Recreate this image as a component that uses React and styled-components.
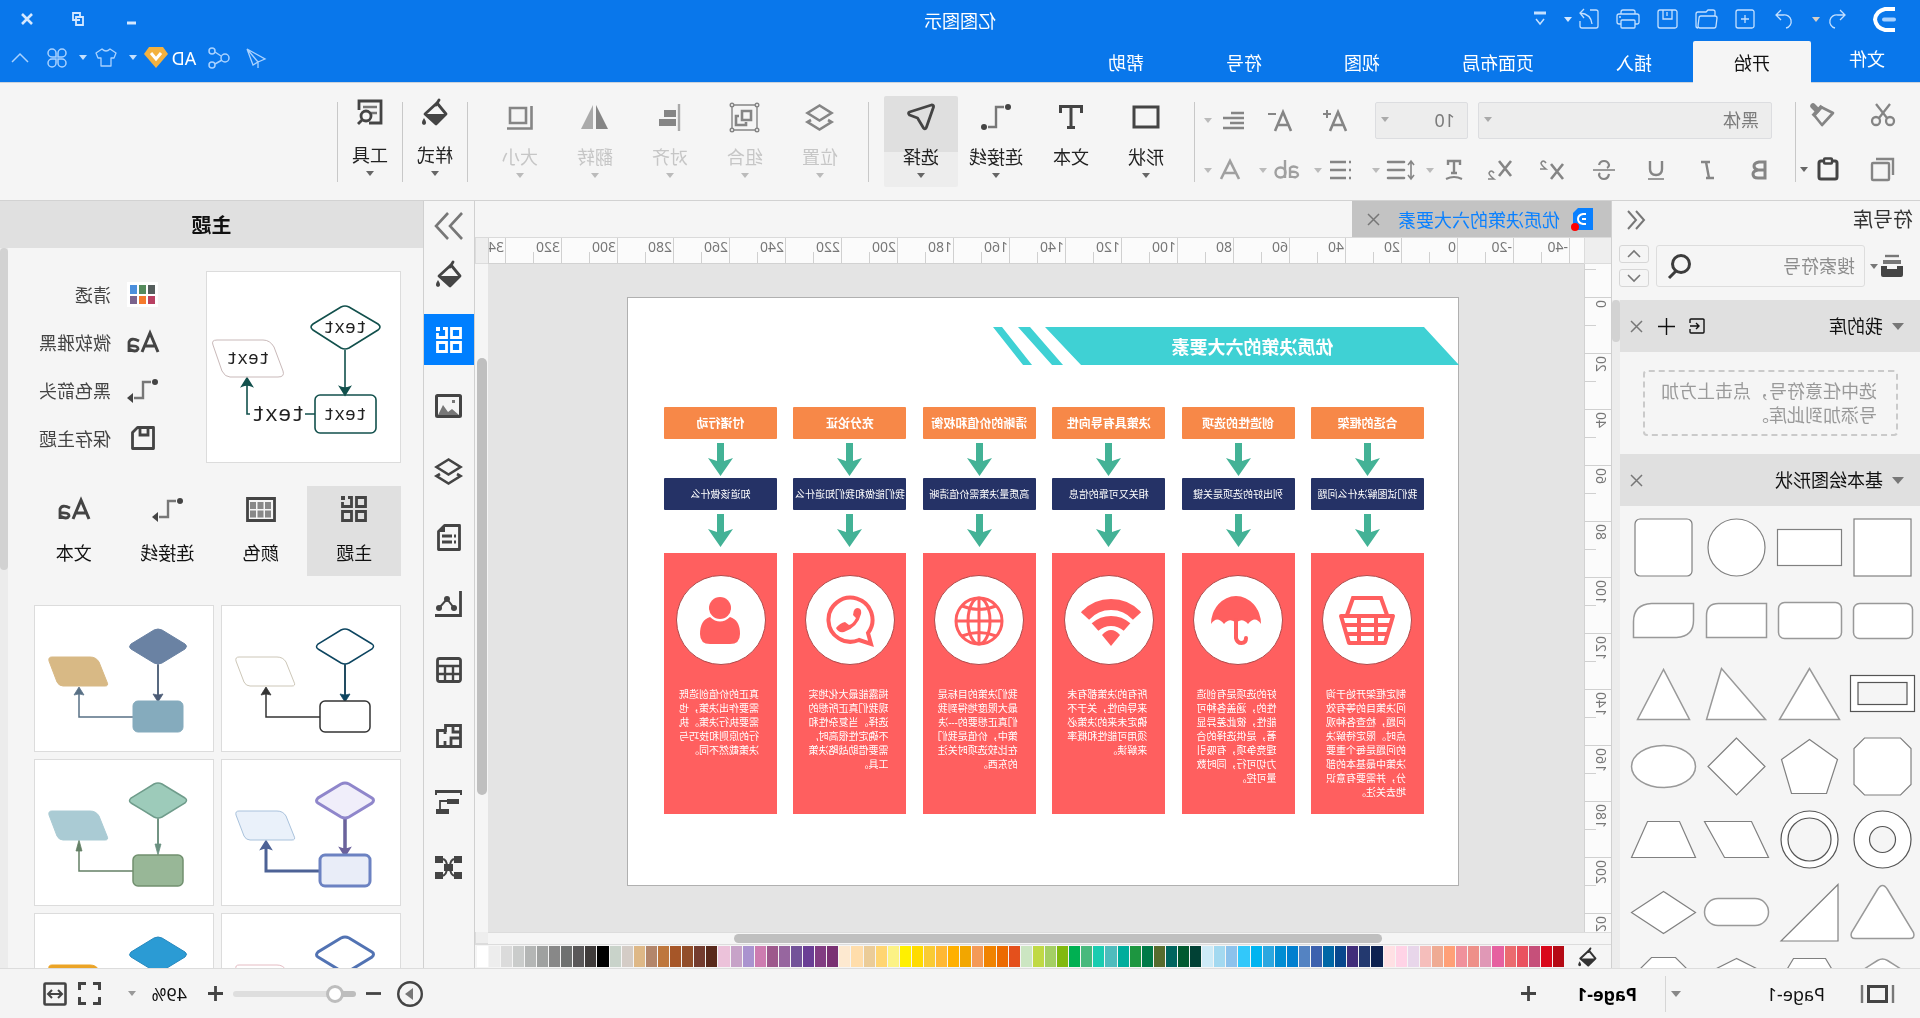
import React from 'react';
import styled, { createGlobalStyle, css } from 'styled-components';

const GlobalStyle = createGlobalStyle`
  * {
    box-sizing: border-box;
  }

  body {
    margin: 0;
    background: #f5f5f5;
    overflow: hidden;
  }

  body, button, input, select {
    font-family: 'Noto Sans', 'Noto Sans CJK SC', sans-serif;
  }

  button, input, select {
    margin: 0;
    padding: 0;
    border: 0;
    background: none;
    color: inherit;
  }

  h1, h2, h3, p {
    margin: 0;
    font-weight: normal;
  }
`;

/* The whole window is laid out left to right and then flipped. */
const Window = styled.div`
  display: flex;
  flex-direction: column;
  height: 100vh;
  transform: scaleX(-1);
  font-size: 18px;
  line-height: 24px;
  color: #111;
`;

const Svg = styled.svg`
  display: block;
  flex: none;
  fill: none;
  stroke: currentColor;
  stroke-width: ${(p) => p.$stroke || 2};
  overflow: visible;
`;

const Slot = styled.button`
  display: flex;
  align-items: center;
  justify-content: ${(p) => (p.$end ? 'flex-end' : 'center')};
  flex: none;
  width: ${(p) => p.$w || 40}px;
  height: 28px;
  padding-right: ${(p) => (p.$end ? 8 : 0)}px;
  color: ${(p) => p.$color || 'inherit'};
`;

const Triangle = styled.span`
  flex: none;
  width: 0;
  height: 0;
  border: ${(p) => p.$size || 4}px solid transparent;
  border-bottom-width: 0;
  border-top: ${(p) => (p.$size || 4) + 1}px solid ${(p) => p.$color || '#aaa'};
`;

const Divider = styled.span`
  flex: none;
  width: 1px;
  height: 80px;
  margin: 19px ${(p) => p.$after || 0}px 0 ${(p) => p.$before || 0}px;
  background: #c8c8c8;
`;

/* ---------- header ---------- */

const Header = styled.header`
  flex: none;
  height: 83px;
  border-bottom: 1px solid #ccd3dc;
  background: #0977eb;
  color: #fff;
`;

const TitleBar = styled.div`
  display: grid;
  grid-template-columns: 1fr auto 1fr;
  align-items: center;
  height: 41px;
  padding: 0 2px 3px;
`;

const QuickAccess = styled.div`
  display: flex;
  align-items: center;
  color: #c4e0ff;
`;

const QuickCaret = styled.button`
  display: flex;
  justify-content: center;
  width: 14px;
  margin: 0 5px 0 -5px;
`;

const Logo = styled(Svg)`
  margin: 0 16px 0 23px;
  color: #fff;
`;

const AppTitle = styled.h1`
  font-size: 18px;
  padding-top: 4px;
`;

const WindowButtons = styled.div`
  display: flex;
  justify-content: flex-end;
  color: #d5e8ff;
`;

const MenuBar = styled.div`
  display: flex;
  justify-content: space-between;
  height: 41px;
`;

const Tabs = styled.nav`
  display: flex;
`;

const FileTab = styled.button`
  width: 109px;
  padding: 0 3px 8px 0;
  font-size: 18px;
`;

const MenuTab = styled.button`
  padding: 0 41px;
  border-radius: 2px 2px 0 0;
  font-size: 18px;
  background: ${(p) => (p.$active ? '#f5f5f5' : 'none')};
  color: ${(p) => (p.$active ? '#111' : '#fff')};
  height: ${(p) => (p.$active ? 42 : 41)}px;
`;

const AccountBar = styled.div`
  display: flex;
  align-items: center;
  padding: 0 1px 8px 0;
  color: #a9d2ff;
`;

const AccountName = styled.span`
  width: 32px;
  color: #fff;
  text-align: center;
`;

/* ---------- ribbon ---------- */

const Ribbon = styled.div`
  display: flex;
  flex: none;
  height: 118px;
  padding-left: 16px;
  border-bottom: 1px solid #d2d2d2;
  background: #f5f5f5;
`;

const ToolRows = styled.div`
  display: grid;
  align-content: start;
  grid-auto-rows: ${(p) => p.$row}px;
  padding-top: ${(p) => p.$top}px;
  margin-left: ${(p) => p.$left || 0}px;
`;

const ToolRow = styled.div`
  display: flex;
  align-items: center;
  padding-left: ${(p) => p.$indent || 0}px;
  color: #858585;
`;

const Spacer = styled.span`
  width: ${(p) => p.$w || 18}px;
`;

const CaretButton = styled.button`
  display: flex;
  justify-content: center;
  width: ${(p) => p.$w || 8}px;
`;

const SelectBox = styled.label`
  display: flex;
  align-items: center;
  position: relative;
  width: ${(p) => p.$w}px;
  height: 37px;
  margin-right: 10px;
  border: 1px solid #dcdde0;
  border-radius: 2px;
  background: #ededed;
  color: #7b7b7b;

  select {
    appearance: none;
    flex: 1;
    height: 100%;
    padding-left: 12px;
    font-size: 18px;
  }

  ${Triangle} {
    position: absolute;
    right: 5px;
    top: 14px;
  }
`;

const BigButton = styled.button`
  display: flex;
  flex-direction: column;
  align-items: center;
  flex: none;
  width: ${(p) => p.$w || 74}px;
  height: 91px;
  margin: 13px ${(p) => (p.$w ? 0 : 1)}px 0 0;
  border-radius: 2px;
  font-size: 18px;
  line-height: 24px;
  color: ${(p) => (p.disabled ? '#c6c6c6' : '#222')};
  ${(p) =>
    p.$active &&
    css`
      background: linear-gradient(#dfdfdf 56px, #ededed 56px);
    `}
`;

const BigIcon = styled.span`
  display: flex;
  align-items: center;
  height: ${(p) => (p.$raised ? 32 : 42)}px;
  margin-bottom: ${(p) => (p.$raised ? 15 : 7)}px;
  color: ${(p) => (p.$muted ? '#858585' : '#444')};

  & + span {
    margin-bottom: 4px;
  }
`;

/* ---------- body ---------- */

const Main = styled.main`
  display: flex;
  flex: 1;
  min-height: 0;
`;

const Library = styled.aside`
  display: flex;
  flex-direction: column;
  flex: none;
  width: 309px;
  border-right: 1px solid #d0d0d0;
`;

const LibraryTitle = styled.h2`
  display: flex;
  align-items: center;
  justify-content: space-between;
  height: 37px;
  padding: 0 15px 0 7px;
  font-size: 20px;
  color: #333;
`;

const SearchRow = styled.div`
  display: flex;
  align-items: center;
  height: 62px;
  padding: 0 7px 6px 15px;
  color: #555;
`;

const SearchField = styled.label`
  display: flex;
  align-items: center;
  flex: 1;
  min-width: 0;
  height: 42px;
  margin: 0 7px 0 3px;
  padding: 0 9px;
  border: 1px solid #ddd;
  border-radius: 3px;
  color: #3c3c3c;

  ${Svg} {
    margin-right: 2px;
  }

  input {
    flex: 1;
    min-width: 0;
    font-size: 18px;
    outline: none;
  }

  input::placeholder {
    color: #8d8d8d;
    opacity: 1;
  }
`;

const Stepper = styled.div`
  display: grid;
  gap: 6px;
`;

const StepButton = styled.button`
  display: flex;
  align-items: center;
  justify-content: center;
  width: 30px;
  height: 18px;
  border: 1px solid #d6d6d6;
  border-radius: 3px;
  color: #777;
`;

const Scroller = styled.div`
  display: flex;
  flex: 1;
  min-height: 0;
`;

const ScrollContent = styled.div`
  flex: 1;
  min-width: 0;
  overflow: hidden;
`;

const Gutter = styled.div`
  flex: none;
  width: 8px;
  background: #ececec;

  &::before {
    content: '';
    display: block;
    height: ${(p) => p.$thumb}px;
    border-radius: 4px;
    background: #d2d2d2;
  }
`;

const SectionHead = styled.h3`
  display: flex;
  align-items: center;
  height: 52px;
  padding: 0 2px 0 16px;
  background: #e0e0e0;
  font-size: 18px;
  color: #111;

  span + span {
    flex: 1;
    margin-left: 9px;
  }
`;

const DropHint = styled.p`
  margin: 18px 23px 18px 22px;
  padding: 7px 16px 7px 19px;
  border: 2px dashed #cacaca;
  border-radius: 4px;
  color: #9a9a9a;
  line-height: 24px;
`;

const ShapeGrid = styled.div`
  display: grid;
  grid-template-columns: repeat(4, 73px);
  grid-auto-rows: 73px;
  padding: 5px 0 0 1px;
`;

const Workspace = styled.section`
  display: flex;
  flex-direction: column;
  flex: 1;
  min-width: 0;
  border-right: 1px solid #d0d0d0;
`;

const DocTabs = styled.div`
  display: flex;
  height: 37px;
  border-bottom: 1px solid #dadada;
`;

const DocTab = styled.button`
  display: flex;
  align-items: center;
  width: 259px;
  padding-left: 18px;
  background: #c3c3c3;
  font-size: 18px;
  color: #0980ff;

  span {
    flex: 1;
    margin-left: 13px;
    text-align: left;
    white-space: nowrap;
  }
`;

const Editor = styled.div`
  display: grid;
  grid-template-columns: 27px minmax(0, 1fr) 13px;
  grid-template-rows: 26px minmax(0, 1fr) 12px;
  flex: 1;
  min-height: 0;
`;

const Corner = styled.div`
  background: #eeeeee;
  border: 1px solid #dcdcdc;
  border-width: 0 1px 1px 0;
`;

const RulerX = styled.div`
  display: flex;
  overflow: hidden;
  padding-left: 14px;
  border: 1px solid #d2d2d2;
  border-width: 0 1px 1px 0;
  background: #fbfbfb;
`;

const TickX = styled.span`
  flex: 0 0 56px;
  padding-left: 1px;
  border-left: 1px solid #d0d0d0;
  background: linear-gradient(#d0d0d0, #d0d0d0) 27px 14px / 1px 12px no-repeat;
  font-size: 14px;
  line-height: 18px;
  color: #777;
`;

const RulerY = styled.div`
  overflow: hidden;
  padding-top: 33px;
  border-right: 1px solid #d2d2d2;
  background: linear-gradient(#d0d0d0, #d0d0d0) 15px 5px / 12px 1px no-repeat #fbfbfb;
`;

const TickY = styled.div`
  height: 56px;
  padding: 2px 0 0 1px;
  border-top: 1px solid #d0d0d0;
  background: linear-gradient(#d0d0d0, #d0d0d0) 15px 27px / 12px 1px no-repeat;
  font-size: 14px;
  line-height: 18px;
  color: #777;

  span {
    display: block;
    writing-mode: vertical-rl;
    transform: rotate(180deg);
  }
`;

const ScrollY = styled.div`
  padding: 94px 2px 0 1px;
  background: #f5f5f5;

  &::before {
    content: '';
    display: block;
    height: 437px;
    border-radius: 5px;
    background: #bfbfbf;
  }
`;

const ScrollX = styled.div`
  grid-column: 1 / 3;
  padding: 1px 0 0 229px;
  border-top: 1px solid #dcdcdc;
  background: #f5f5f5;

  &::before {
    content: '';
    display: block;
    width: 648px;
    height: 9px;
    border-radius: 5px;
    background: #bfbfbf;
  }
`;

const Canvas = styled.div`
  overflow: hidden;
  padding: 33px 0 0 125px;
  background: #e4e4e4;
`;

const Palette = styled.div`
  display: flex;
  align-items: center;
  flex: none;
  gap: 1px;
  height: 24px;
  padding-right: 1px;
  border-top: 1px solid #dcdcdc;
  color: #333;
`;

const Swatch = styled.button`
  flex: 1;
  height: 21px;
  background: ${(p) => p.$color};
`;

/* ---------- drawing ---------- */

const Paper = styled.article`
  width: 832px;
  height: 589px;
  padding-top: 29px;
  border: 1px solid #b0b0b0;
  background: #fff;
  color: #fff;
`;

const Banner = styled.div`
  display: grid;
  align-items: center;

  & > * {
    grid-area: 1 / 1;
  }

  h2 {
    width: 411px;
    padding-top: 2px;
    text-align: center;
    font-size: 18px;
    font-weight: bold;
  }
`;

const Columns = styled.div`
  display: flex;
  justify-content: space-between;
  margin-top: 42px;
  padding: 0 36px 0 34px;
`;

const Column = styled.section`
  width: 113px;
`;

const Box = styled.h3`
  height: 32px;
  border-radius: 1px;
  background: ${(p) => (p.$dark ? '#253266' : '#f78848')};
  font-size: ${(p) => (p.$dark ? 10 : 12)}px;
  font-weight: ${(p) => (p.$dark ? 'normal' : 'bold')};
  line-height: 33px;
  text-align: center;
  white-space: nowrap;
`;

const ArrowGap = styled.div`
  display: flex;
  justify-content: center;
  height: ${(p) => p.$h}px;
  padding-top: 4px;
`;

const RedCard = styled.div`
  height: 261px;
  padding-top: 21px;
  background: #ff5f5f;
  color: #ff5f5f;

  p {
    margin: 21px 0 0 18px;
    color: #fff;
    font-size: 10px;
    line-height: 14px;
    white-space: pre;
  }

  ${Svg} {
    margin: 0 auto;
  }
`;

/* ---------- right side ---------- */

const IconStrip = styled.nav`
  display: flex;
  flex-direction: column;
  align-items: center;
  flex: none;
  gap: 15px;
  width: 51px;
  border-right: 1px solid #d0d0d0;
  color: #444;
`;

const StripButton = styled.button`
  display: flex;
  align-items: center;
  justify-content: center;
  width: 50px;
  height: ${(p) => (p.$first ? 32 : 51)}px;
  margin-top: ${(p) => (p.$first ? 9 : 0)}px;
  margin-bottom: ${(p) => (p.$first ? -9 : 0)}px;
  background: ${(p) => (p.$active ? '#007fff' : 'none')};
  color: ${(p) => (p.$active ? '#fff' : 'inherit')};
`;

const ThemePanel = styled.aside`
  display: flex;
  flex-direction: column;
  flex: none;
  width: 423px;
`;

const PanelTitle = styled.h2`
  height: 47px;
  background: #e0e0e0;
  font-size: 20px;
  font-weight: bold;
  line-height: 49px;
  text-align: center;
`;

const PanelBody = styled.div`
  padding: 23px 19px 0 22px;
`;

const Current = styled.div`
  display: flex;
`;

const Preview = styled.div`
  width: 195px;
  height: 192px;
  border: 1px solid #dcdcdc;
  background: #fff;

  text {
    fill: #222;
    stroke: none;
    font-family: 'Liberation Mono', monospace;
    font-size: 18px;
    text-anchor: middle;
  }
`;

const OptionList = styled.div`
  display: grid;
  grid-auto-rows: 48px;
  padding-left: 43px;
`;

const Option = styled.button`
  display: flex;
  align-items: center;
  height: 46px;
  font-size: 18px;
  color: #444;

  & > span:last-child {
    margin-left: 12px;
  }
`;

const OptionIcon = styled.span`
  display: flex;
  justify-content: center;
  width: 40px;
`;

const ThemeTabs = styled.div`
  display: grid;
  grid-template-columns: repeat(4, 1fr);
  margin: 23px 0 29px;
`;

const ThemeTab = styled.button`
  display: flex;
  flex-direction: column;
  align-items: center;
  height: 90px;
  padding-top: 8px;
  background: ${(p) => (p.$active ? '#e0e0e0' : 'none')};
  font-size: 18px;

  span:first-child {
    display: flex;
    align-items: center;
    height: 30px;
    margin-bottom: 15px;
    color: #444;
  }
`;

const ThemeGrid = styled.div`
  display: grid;
  grid-template-columns: repeat(2, 180px);
  grid-auto-rows: 147px;
  gap: 7px;
`;

const ThemeCard = styled.button`
  border: 1px solid #dcdcdc;
  background: #fff;
`;

const Status = styled.footer`
  display: flex;
  align-items: center;
  justify-content: space-between;
  flex: none;
  height: 50px;
  padding: 0 37px 0 26px;
  border-top: 1px solid #dcdcdc;
  background: #f4f4f4;
  color: #444;
`;

const StatusGroup = styled.div`
  display: flex;
  align-items: center;
`;

const PageName = styled.button`
  display: flex;
  align-items: center;
  justify-content: space-between;
  width: 160px;
  height: 36px;
  margin-left: 36px;
  padding-right: 5px;
  border-right: 1px solid #d6d6d6;
  font-size: 18px;
  color: #111;
`;

const PageTab = styled.button`
  margin: 0 28px;
  font-size: 18px;
  font-weight: bold;
  color: #000;
`;

const ZoomSlider = styled.input`
  appearance: none;
  width: 123px;
  height: 18px;

  &::-webkit-slider-runnable-track {
    height: 6px;
    border-radius: 3px;
    background: linear-gradient(90deg, #bdbdbd 16%, #dedede 16%);
  }

  &::-webkit-slider-thumb {
    appearance: none;
    width: 18px;
    height: 18px;
    margin-top: -6px;
    border: 3px solid #bdbdbd;
    border-radius: 50%;
    background: #fff;
  }
`;

const ZoomValue = styled.span`
  width: 53px;
  padding-left: 12px;
  color: #111;
`;

const I = ({ w = 24, h = w, s, children }) => (
  <Svg width={w} height={h} viewBox={`0 0 ${w} ${h}`} $stroke={s} aria-hidden="true">
    {children}
  </Svg>
);

const solid = { fill: 'currentColor', stroke: 'none' };

const icons = {
  undo: <I w={18} h={20} s={1.3}><path d="M6 1 1 6l5 5M1 6h7a6.5 6.5 0 0 1 3 13" /></I>,
  redo: <I w={18} h={20} s={1.3}><path d="m12 1 5 5-5 5M17 6h-7a6.5 6.5 0 0 0-3 13" /></I>,
  create: <I w={20} s={1.3}><rect x="1" y="1" width="18" height="18" rx="2" /><path d="M10 6v8M6 10h8" /></I>,
  open: <I w={24} h={20} s={1.3}><path d="M3 7V3q0-2 2-2h5l2 2h8q2 0 2 2v12q0 2-2 2M3 7h14q2 0 2 2l1 8q0 2-2 2H4q-2 0-2-2L1 9q0-2 2-2z" /></I>,
  save: <I w={21} h={20} s={1.3}><rect x="1" y="1" width="19" height="18" rx="2" /><path d="M6 1v9h9V1M11 3v4" /></I>,
  print: <I w={24} h={20} s={1.3}><path d="M5 5V3q0-2 2-2h10q2 0 2 2v2M5 15H3q-2 0-2-2V7q0-2 2-2h18q2 0 2 2v6q0 2-2 2h-2M19 8h2" /><rect x="5" y="11" width="14" height="8" rx="1" /></I>,
  exportFile: <I w={20} s={1.3}><path d="M9 1H3Q1 1 1 3v14q0 2 2 2h14q2 0 2-2v-5M7 15Q8 5 19 4M15 0l4 4-4 5" /></I>,
  customize: <I w={12} h={16} s={2}><path d="M0 2h12" strokeWidth="3" /><path d="m2 8 4 5 4-5" strokeWidth="1.5" /></I>,
  minimize: <I w={10} h={14} s={3}><path d="M0 11h9" /></I>,
  restore: <I w={12} h={14} s={1.8}><path d="M4 8H11V1H4V5M1 5h7v8H1z" transform="translate(0 0)" /></I>,
  close: <I w={12} h={12} s={2.6}><path d="m1 1 10 10M11 1 1 11" /></I>,
  send: <I w={20} s={1.3}><path d="M19 1 1 11l7 3zM19 1l-6 16-5-3v6M19 1 8 14" /></I>,
  share: <I w={22} s={1.5}><circle cx="5" cy="11" r="4" /><circle cx="18" cy="4" r="3" /><circle cx="18" cy="18" r="3" /><path d="m9 9 6-4M8 13l7 4" /></I>,
  shirt: <I w={22} h={19} s={1.3}><path d="M7 1q4 4 8 0l6 4-2 5h-3v8H6v-8H3L1 5z" strokeLinejoin="round" /></I>,
  clover: <I w={20} s={1.5}><path d="M9 9H5a4 4 0 1 1 4-4zM11 9V5a4 4 0 1 1 4 4zM9 11v4a4 4 0 1 1-4-4zM11 11h4a4 4 0 1 1-4 4z" /></I>,
  up: <I w={18} h={10} s={1.5}><path d="m1 9 8-8 8 8" /></I>,
  cut: <I w={24} s={2.3}><circle cx="5" cy="18" r="4" /><circle cx="19" cy="18" r="4" /><path d="M5 1 16 15M19 1 8 15" /></I>,
  painter: <I w={25} h={24} s={2.6}><path d="M14 4 2 10l11 12 8-10z" strokeLinejoin="round" /><path d="m22 3-4 4" strokeWidth="5.500" strokeLinecap="round" /><path d="m13 3 9 10" strokeWidth="4" /></I>,
  copy: <I w={23} s={2.4}><path d="M1 17V1h17" /><rect x="5" y="5" width="17" height="17" rx="1" /></I>,
  paste: <I w={22} h={24} s={3}><rect x="2" y="4" width="18" height="18" rx="2" /><rect x="7" y="1.5" width="8" height="5" rx="1" fill="#f5f5f5" strokeWidth="2.4" /></I>,
  grow: <I w={24} h={22} s={2.6}><path d="m1 22 8-19 8 19M4 16h10" /><path d="M16 5h8M20 1v8" strokeWidth="2" /></I>,
  shrink: <I w={24} h={22} s={2.6}><path d="m1 22 8-19 8 19M4 16h10" /><path d="M16 5h8" strokeWidth="2" /></I>,
  align: <I w={21} h={17} s={2.4}><path d="M0 1h13M0 6h21M0 11h14M0 16h21" /></I>,
  bold: <I w={15} h={18} s={3}><path d="M2 1h6q5 1 5 4 0 3-4 4H2zM2 9h7q5 1 5 4 0 4-5 4H2z" /></I>,
  italic: <I w={15} h={18} s={2.4}><path d="M5 1h9M1 17h8M9 1 6 17" /></I>,
  underline: <I w={16} h={19} s={2.4}><path d="M2 0v8q0 6 6 6t6-6V0" /><path d="M0 18h16" strokeWidth="1.6" /></I>,
  strike: <I w={22} h={20} s={2.2}><path d="M16 5q-1-4-5-4T6 5q0 2 2 3M6 14q1 5 5 5t5-4q0-1-1-2" /><path d="M0 10h22" strokeWidth="1.6" /></I>,
  sup: <I w={24} h={20} s={2.6}><path d="m1 4 12 15M13 4 1 19" /><path d="M18 3q3-4 5 0 0 2-5 6h6" strokeWidth="1.6" /></I>,
  sub: <I w={24} h={20} s={2.6}><path d="m1 1 12 15M13 1 1 16" /><path d="M18 13q3-4 5 0 0 2-5 6h6" strokeWidth="1.6" /></I>,
  caseText: <I w={18} h={20} s={2.4}><path d="M3 5V1h12v4M9 1v12M6 13h6" /><path d="M1 19q8-4 16 0" strokeWidth="2" /></I>,
  spacing: <I w={27} h={20} s={2.6}><path d="M11 2h16M11 10h16M11 18h16" strokeLinecap="round" /><path d="M4 1v18M1 5l3-4 3 4M1 15l3 4 3-4" strokeWidth="1.6" /></I>,
  list: <I w={22} h={20} s={2.6}><path d="M6 2h16M6 10h16M6 18h16M1 2h2M1 10h2M1 18h2" /></I>,
  highlight: <I w={25} h={20} s={2.4}><path d="M2 8q5-3 8 0v10M10 12q-8-1-8 3 1 4 8 1M15 0v18" /><circle cx="19.5" cy="12.5" r="5" /></I>,
  fontColor: <I w={20} h={20} s={2.6}><path d="m1 19 9-18 9 18M4 13h12" /></I>,
  shape: <I w={28} h={24} s={3}><rect x="2" y="2" width="24" height="20" /></I>,
  text: <I w={24} s={3}><path d="M1.5 8V1.5h21V8M12 1v21M8 22.5h8" /></I>,
  connector: <I w={30} h={26}><circle cx="3" cy="3" r="3" {...solid} /><circle cx="27" cy="23" r="3" {...solid} /><path d="M7 3h8v20h8" stroke="#777" strokeWidth="2.4" /></I>,
  select: <I w={28} s={2.8}><path d="M1.5 3Q1 1 3.500 1l22 7q2 1 0 3l-8 3-6 10q-2 2-3-1z" strokeLinejoin="round" transform="translate(0 1)" /></I>,
  layers: <I w={27} h={27} s={2.6}><path d="m13.500 1.500 12 7.500-12 7.500L1.500 9zM5 16l-3.500 2 12 7.500 12-7.500-3.500-2" /></I>,
  group: <I w={29} s={1.4}><path d="M2 2h25v25H2z" /><g fill="#f5f5f5"><circle cx="2" cy="2" r="1.800" /><circle cx="27" cy="2" r="1.800" /><circle cx="2" cy="27" r="1.800" /><circle cx="27" cy="27" r="1.800" /></g><path d="M8 8h9v9H8zM20 13h3v9h-10v-3" strokeWidth="2.6" /></I>,
  alignObj: <I w={21} h={27}><path d="M1 0v27" stroke="#aaa" strokeWidth="2.4" /><path d="M4 6h12v7H4zM4 15h17v7H4z" {...solid} /></I>,
  flip: <I w={27} h={24}><path d="M0 24h12V0z" {...solid} /><path d="M15 24h12L15 0z" fill="#aaa" stroke="none" /></I>,
  size: <I w={26} h={25} s={2.6}><path d="M7 3h16v15H7zM1.500 1v22.500H26" /></I>,
  bucket: <I w={26} h={28} s={2.8}><path d="M11 5 23 16 12 26 2 16z" strokeLinejoin="round" /><path d="M3 16h20L12 27z" {...solid} /><path d="m12 7-3-5" strokeLinecap="round" /><path d="M24 20q4 6 0 7-4-1 0-7z" {...solid} /></I>,
  tools: <I w={26} s={2.8}><path d="M14 24H2V2h22v9" /><path d="M6 8h14M6 14h6" stroke="#777" strokeWidth="2.400" /><circle cx="17" cy="17" r="5" /><path d="m20 20 5 5" /></I>,
  chevrons: <I w={18} h={20} s={2}><path d="m9 1-8 9 8 9M17 1l-8 9 8 9" stroke="#777" /></I>,
  chevronsBig: <I w={28} s={2.6}><path d="m1 1 12 13L1 27M15 1l12 13-12 13" stroke="#777" /></I>,
  box: <I w={22} h={22}><path d="M4 1h14" stroke="#777" strokeWidth="2.400" /><path d="M2 7h18" stroke="#777" strokeWidth="4" /><path d="M0 11h6v3h10v-3h6v9q0 2-2 2H2q-2 0-2-2z" {...solid} /></I>,
  search: <I w={23} h={25} s={3}><circle cx="10" cy="10" r="8.500" /><path d="m15 17 7 7" /></I>,
  stepUp: <I w={14} h={8} s={1.6}><path d="m1 7 6-6 6 6" /></I>,
  stepDown: <I w={14} h={8} s={1.6}><path d="m1 1 6 6 6-6" /></I>,
  enter: <I w={16} s={1.4}><path d="M15 5V2q0-1-1-1H2Q1 1 1 2v12q0 1 1 1h12q1 0 1-1v-3M15 8H6M9 5 6 8l3 3" /></I>,
  plusThin: <I w={17} s={1.4}><path d="M8.500 0v17M0 8.500h17" /></I>,
  xThin: <I w={11} s={1.500}><path d="m0 0 11 11M11 0 0 11" stroke="#777" /></I>,
  docLogo: <I w={20} h={22}><path d="M0 0h15l5 5v17H0z" {...solid} /><path d="M7 6h3q5 1 5 5t-5 5H7M7 11h4" stroke="#fff" strokeWidth="2" /><circle cx="18" cy="19" r="4" fill="#f00" stroke="none" /></I>,
  theme: <I w={26} s={2.800}><path d="M1.500 1.500h9v9h-9zM1.500 15.500h9v9h-9zM15.500 15.500h9v9h-9zM19 1.500h-3.500v9h9V6" /><path d="M22 0h4v4h-4z" {...solid} /></I>,
  image: <I w={27} h={24} s={3}><rect x="1.500" y="1.500" width="24" height="21" rx="1" /><path d="m3 21 7-6 4 3 5-7 5 10zM7 6h3v3H7z" fill="#777" stroke="none" /></I>,
  doc: <I w={24} h={27} s={2.800}><path d="M1.500 1.500h15l6 6v18h-21z" strokeLinejoin="round" /><path d="M16 1v7h7z" {...solid} /><path d="M5 12h2M9 12h10M5 18h2M9 18h10" /></I>,
  chart: <I w={27} h={26} s={2.800}><path d="M1.500 0v24.500H27" /><path d="m8 17 7-9 8 9" strokeWidth="2" /><circle cx="8" cy="17" r="3" {...solid} /><circle cx="15" cy="8" r="3" {...solid} /><circle cx="23" cy="17" r="3" {...solid} /></I>,
  table: <I w={26} s={2.800}><rect x="1.500" y="1.500" width="23" height="23" rx="2" /><path d="M1 9h24M1 17h24M9 9v16M17 9v16" strokeWidth="2.400" /></I>,
  floor: <I w={26} h={24} s={2.800}><path d="M1.500 1.500h15v5h8v16h-23zM1 14h10v9M9 2v6H2M17 6v4M17 22v-5" /></I>,
  org: <I w={27} h={24}><path d="M0 0h27v5h-2V3H2v2H0z" {...solid} /><path d="M3 9h12v5H3zM13 19h13v5H13z" {...solid} /><path d="M15 11h7v8" strokeWidth="1.800" /></I>,
  mind: <I w={27} h={24}><path d="M0 0h8v7H0zM19 0h8v7h-8zM0 16h8v7H0zM19 16h8v7h-8zM9 8h9v7H9z" {...solid} /><path d="M7 3q5 0 5 8t-5 9M20 3q-5 0-5 8t5 9" strokeWidth="2" /></I>,
  palette: <I w={31} h={25}><path d="M0 0h31v25H0z" fill="#fff" stroke="none" /><g stroke="none"><path d="M3 3h7v9H3z" fill="#555e5d" /><path d="M12 3h7v9h-7z" fill="#558b5c" /><path d="M21 3h7v9h-7z" fill="#4b8fdc" /><path d="M3 14h7v8H3z" fill="#b84062" /><path d="M12 14h7v8h-7z" fill="#f57a2c" /><path d="M21 14h7v8h-7z" fill="#7b638d" /></g></I>,
  fontAa: <I w={32} h={22} s={3}><path d="m1 21 8-19 8 19M4 15h10" /><path d="M20 10q8-4 10 1v10M30 15q-9-1-9 3 2 4 9 0" strokeWidth="2.800" /></I>,
  arrowLine: <I w={31} h={22}><circle cx="3" cy="3" r="3" {...solid} /><path d="M7 3h8v16h9" stroke="#777" strokeWidth="2.400" /><path d="m25 14 6 5-6 5z" {...solid} /></I>,
  saveTheme: <I w={24} s={2.800}><path d="M1.500 1.500h16l5 5v16h-21z" strokeLinejoin="round" /><path d="M7 2v7h8V2" /></I>,
  colors: <I w={30} h={25} s={2.800}><path d="M1.500 1.500h27v22h-27z" /><path d="M5 5h6v7H5zM12.500 5h6v7h-6zM20 5h6v7h-6zM5 13.500h6v7H5zM12.500 13.500h6v7h-6zM20 13.500h6v7h-6z" fill="#888" stroke="none" /></I>,
  pages: <I w={33} h={18} s={3}><path d="M7.500 1.500h18v15h-18z" /><path d="M1 0v18M32 0v18" stroke="#777" strokeWidth="2.400" /></I>,
  plus: <I w={15} s={2.800}><path d="M7.500 0v15M0 7.500h15" /></I>,
  minus: <I w={15} s={2.800}><path d="M0 7.500h15" /></I>,
  play: <I w={26} s={2.400}><circle cx="13" cy="13" r="11.800" /><path d="m10 7 8 6-8 6z" fill="#777" stroke="none" /></I>,
  full: <I w={23} s={3}><path d="M8 1.500H1.500V8M15 1.500h6.500V8M8 21.500H1.500V15M15 21.500h6.500V15" /></I>,
  fit: <I w={24} s={2.600}><rect x="1.500" y="1.500" width="21" height="21" rx="1" /><path d="M6 12h12M9 8l-4 4 4 4M15 8l4 4-4 4" strokeWidth="2" /></I>,
};

const menuTabs = ['开始', '插入', '页面布局', '视图', '符号', '帮助'];

const drawTools = [
  { label: '形状', icon: 'shape', caret: true },
  { label: '文本', icon: 'text' },
  { label: '连接线', icon: 'connector', caret: true },
  { label: '选择', icon: 'select', caret: true, active: true },
];

const arrangeTools = [
  { label: '位置', icon: 'layers' },
  { label: '组合', icon: 'group' },
  { label: '对齐', icon: 'alignObj' },
  { label: '翻转', icon: 'flip' },
  { label: '大小', icon: 'size' },
];

const formatTools = ['bold', 'italic', 'underline', 'strike', 'sup', 'sub'];

const shapeStroke = '#808080';
const soft = { stroke: '#999', strokeWidth: 1.5 };
const hole = { fill: '#f5f5f5' };

const shapes = [
  <rect x="-28.500" y="-28.500" width="57" height="57" />,
  <rect x="-32" y="-18" width="64" height="36" />,
  <circle r="28.500" />,
  <rect x="-28.500" y="-28.500" width="57" height="57" rx="5" />,
  <rect x="-30" y="-17" width="59" height="35" rx="6" {...soft} />,
  <rect x="-32" y="-18" width="63" height="36" rx="6" {...soft} />,
  <path d="M-30-17h48q12 0 12 12V17h-60z" {...soft} />,
  <path d="M-30-17h42q18 1 18 18V17h-43q-17-1-17-17z" {...soft} />,
  <g stroke="#555"><rect x="-32" y="-18" width="64" height="36" /><rect x="-24.500" y="-11" width="49" height="22" {...hole} /></g>,
  <path d="M0-25 30 26h-60z" {...soft} />,
  <path d="M15-25 30 26h-59z" {...soft} />,
  <path d="M0-24 26 26h-52z" {...soft} />,
  <path d="M-18-28.500h36l10.500 10.500v36L18 28.500h-36L-28.500 18v-36z" />,
  <path d="m0-27 28 20-10 34h-35l-11-34z" />,
  <path d="M0-28.500 28.500 0 0 28.500-28.500 0z" />,
  <ellipse rx="32" ry="21" {...soft} />,
  <g stroke="#555"><circle r="28.500" /><circle r="13" {...hole} /></g>,
  <g stroke="#555"><circle r="28.500" /><circle r="21.500" {...hole} /></g>,
  <path d="M-15-18h47L12 18h-44z" />,
  <path d="M-16-18h32l16 36h-64z" />,
  <path d="M-5-23q5-8 10 0l26 43q2 6-4 6h-54q-6 0-4-6z" {...soft} />,
  <path d="M-28.500-28v56.500h57z" />,
  <rect x="-32" y="-14" width="64" height="27" rx="13.500" {...soft} />,
  <path d="M0-21 32 0 0 21-32 0z" />,
  <path d="M-5-25q5-3 10 0l22 14v30h-54v-30z" {...soft} />,
  <path d="M-16-27h32l12 20-8 30h-40l-8-30z" />,
  <path d="m0-27 28 14v26L0 27l-28-14v-26z" />,
  <path d="M-12-28h24l16 16v24L12 28h-24l-16-16v-24z" />,
];

const palette = (
  'b50a15 d9081b c6507a ea5260 eb6b6f e661a0 e098b6 ee9089 f0919c ffa077 efab93 f5bebb e8d6ea ffd3e6 ffe0e4 ' +
  '0d2150 23396f 412d7a 08478d 0067a6 3c61ae 5483c2 007fcf 008dd3 2ba7e0 00b4f0 32c8fa 8cc2ec a3d9f0 ceebf7 ' +
  '014135 015a30 00655f 576c2e 007a48 1d9640 00ad9c 4fbcbd 1accb0 48b97d 00b052 81b90f a4cf64 c0d945 cce6c2 ' +
  'e4501c ec6a00 f08300 f49a56 f2a600 ffb000 ffb834 f9cb34 ffdb00 fff000 fcf285 ffd572 ebcc98 ffddab fde9d0 ' +
  '7a3173 823d82 6a3e95 735399 97669f 9d588c cd7cb0 aa93cf c7a3c8 ecc2da ' +
  '59291b 743c2f 924e2a a65628 be773d b3866b deb887 d4ccc6 c9d3ca ' +
  '000000 3f3b3a 5a5859 6f7170 888888 9fa1a0 b4b6b5 cacccb dbdbdb ededed ffffff'
).split(' ');

const columns = [
  {
    title: '合适的框架',
    question: '我们试图解决什么问题',
    text: '制定框架开始于询\n问决策目的等有效\n问题，检查各种观\n点时。限定待解决\n的问题是每个重要\n决策中最基本的部\n分，并需要有意识\n地去关注。',
    icon: (
      <g strokeWidth="4">
        <path d="m-20-5 6-17h28l6 17M-9-4v27M8-4v27M-22 5h44M-20 14h40" />
        <path d="M-26-4h52l-8 27h-36z" strokeLinejoin="round" />
      </g>
    ),
  },
  {
    title: '创造性的选项',
    question: '列出好的选项是关键',
    text: '好的选项是有创造\n性的，涵盖各种可\n能性，彼此差异显\n著，是供选择的合\n理竞争项，有吸引\n力切可行，同时数\n量可控。',
    icon: (
      <>
        <path d="M-23 4a25 28 0 0 1 50 0q-6-9-13 0-6-7-12-1-6-6-12 1-7-9-13 0z" {...solid} />
        <path d="M2 0v18q-1 5-5.500 5T-8 18" strokeWidth="4" strokeLinecap="round" />
      </>
    ),
  },
  {
    title: '决策具有导向性',
    question: '相关又可靠的信息',
    text: '所有的决策都有未\n来导向性，关于不\n确定未来的决策必\n须用可能性和概率\n来解读。',
    icon: (
      <g strokeWidth="11" transform="translate(-2 0)">
        <path d="M-26-4a35 35 0 0 1 52 0" />
        <path d="M-16 7a24 24 0 0 1 32 0" strokeWidth="10" />
        <path d="M-9 15q9-10 18 0L0 26z" {...solid} />
      </g>
    ),
  },
  {
    title: '清晰的价值和权衡',
    question: '高质量决策需价值清晰',
    text: '我们决策的目标是\n最大限度地得到我\n们真正想要的---决\n策中，价值是我们\n在比较选项时关注\n的东西。',
    icon: (
      <g strokeWidth="3">
        <circle cy="1" r="23" />
        <ellipse cy="1" rx="11" ry="23" />
        <path d="M0-22v46M-23 1h46M-17-14q17 7 34 0M-17 16q17-7 34 0" />
      </g>
    ),
  },
  {
    title: '充分论证',
    question: '我们能做和我们知道什么',
    text: '揭露能最大化地实\n现我们真正所想的\n选择。当复杂性和\n不确定性很高时,\n需要借助战略决策\n工具。',
    icon: (
      <g strokeWidth="4">
        <path d="M-18 13A22 22 0 1 1-9 20l-12 4z" />
        <path d="M-11-6q-1-6 4-6 4 1 4 7l-3 3q3 6 7 7l4-3q5 1 9 6-2 5-8 4Q-8 7-11-6z" {...solid} />
      </g>
    ),
  },
  {
    title: '付诸行动',
    question: '知道该做什么',
    text: '真正的价值创造既\n需要作出决策，也\n需要执行决策。执\n行的原则和技巧与\n决策截然不同。',
    icon: (
      <g {...solid}>
        <circle cx="1" cy="-12" r="11" />
        <path d="M-9-3Q1 6 11-3q10 3 10 17 0 10-10 10H-9q-10 0-10-10 0-14 10-17z" />
      </g>
    ),
  },
];

const stripIcons = ['bucket', 'theme', 'image', 'layers', 'doc', 'chart', 'table', 'floor', 'org', 'mind'];

const options = [
  { label: '清透', icon: 'palette' },
  { label: '微软雅黑', icon: 'fontAa' },
  { label: '黑色箭头', icon: 'arrowLine' },
  { label: '保存主题', icon: 'saveTheme' },
];

const themeTabs = [
  { label: '主题', icon: 'theme' },
  { label: '颜色', icon: 'colors' },
  { label: '连接线', icon: 'arrowLine' },
  { label: '文本', icon: 'fontAa' },
];

const themes = [
  { a: ['#fff', '#0d4560', 1.5], b: ['#fff', '#cdc7b8', 1], c: ['#fff', '#333', 1.5], down: '#0d4560', side: '#333', line: 1.5 },
  { a: ['#6a82a3', '#6a82a3', 1], b: ['#d8b985', '#d8b985', 1], c: ['#85abbd', '#85abbd', 1], down: '#4b5b75', side: '#587085', line: 1.5 },
  { a: ['#f0eefa', '#8f86cb', 3], b: ['#eaf1fa', '#a9c2dc', 1], c: ['#e9edf8', '#6c82c2', 3], down: '#6c629c', side: '#4d6296', line: 3 },
  { a: ['#9dcbba', '#6f9c8b', 1.5], b: ['#aacbd4', '#aacbd4', 1], c: ['#98b797', '#71906f', 1.5], down: '#6a9080', side: '#648066', line: 1.5, slim: true },
  { a: ['#fff', '#5273b3', 3], b: ['#fff', '#e5bcc3', 1], c: ['#fff', '#5273b3', 2], down: '#5273b3', side: '#5273b3', line: 2 },
  { a: ['#2b9bd4', '#2788bd', 1], b: ['#eba427', '#eba427', 1], c: ['#59a868', '#59a868', 1], down: '#2788bd', side: '#888', line: 1.5 },
];

const paint = ([fill, stroke, strokeWidth]) => ({ fill, stroke, strokeWidth });

const ThemeSketch = ({ theme }) => (
  <Svg width="178" height="145" viewBox="1 1 178 145" aria-hidden="true">
    <path d="M56 60v30M81 112h54V88" stroke={theme.side} strokeWidth={theme.line} />
    <path d="M56 59v32" stroke={theme.down} strokeWidth={theme.line} />
    <path d={theme.slim ? 'm53 85h6l-3 11z' : 'M51 89q5 2 10 0l-5 8z'} fill={theme.down} stroke={theme.down} strokeWidth={theme.line / 2} />
    <path d={theme.slim ? 'm132 92h6l-3-11z' : 'M130 90q5-2 10 0l-5-8z'} fill={theme.side} stroke={theme.side} strokeWidth={theme.line / 2} />
    <path d="M52 25q4-2 8 0l23 14q3 3 0 5L60 58q-4 2-8 0L29 44q-3-3 0-5z" {...paint(theme.a)} />
    <path d="M124 52h38q4 0 3 4l-8 21q-2 4-6 4h-42q-4 0-2-4l8-20q3-5 9-5z" {...paint(theme.b)} />
    <rect x="31" y="96" width="50" height="31" rx="5" {...paint(theme.c)} />
  </Svg>
);

const CurrentTheme = () => (
  <Svg width="193" height="190" viewBox="1 1 193 190" $stroke={1.6}>
    <g stroke="#12504c">
      <path d="M52 36q4-2 8 0l28 17q4 3 0 6L60 77q-4 2-8 0L23 59q-4-3 0-6zM56 79v38" />
      <path d="M51 116q5 2 10 0l-5 8z" fill="#12504c" />
      <rect x="25" y="124" width="61" height="38" rx="5" />
      <path d="M86 143h10M151 143h3v-30" />
      <path d="M149 115q5-2 10 0l-5-8z" fill="#12504c" />
    </g>
    <path d="M138 69h46q6 0 4 5l-9 26q-3 6-8 6h-48q-7 0-5-6l9-24q4-7 11-7z" stroke="#c9b9b9" strokeWidth="1" />
    <text x="56" y="62">text</text>
    <text x="56" y="149">text</text>
    <text x="153" y="93">text</text>
    <text x="123" y="150" style={{ fontSize: 22 }}>text</text>
  </Svg>
);

const DownArrow = () => (
  <Svg width="25" height="33" viewBox="0 0 25 33">
    <path d="M9 0h7v18l9-3-12.500 18L0 15l9 3z" fill="#43b296" stroke="none" />
  </Svg>
);

const ToolButton = ({ tool, disabled }) => (
  <BigButton $active={tool.active} disabled={disabled}>
    <BigIcon $muted={disabled}>{icons[tool.icon]}</BigIcon>
    <span>{tool.label}</span>
    {(disabled || tool.caret) && <Triangle $color={disabled ? '#bbb' : '#666'} />}
  </BigButton>
);

function TopBar() {
  return (
    <Header>
      <TitleBar>
        <QuickAccess>
          <Logo width="22" height="25" viewBox="0 0 22 25" $stroke={4}>
            <path d="M0 2h10q9 2 10 10.500Q19 21 10 23H0" />
            <path d="M1 12.500h10" stroke="#a9d2ff" strokeLinecap="round" />
          </Logo>
          <Slot $w={39} aria-label="撤销">{icons.undo}</Slot>
          <QuickCaret aria-label="撤销记录"><Triangle $color="#d8cfc4" /></QuickCaret>
          {['redo', 'create', 'open', 'save', 'print', 'exportFile'].map((name) => (
            <Slot key={name} $w={39} aria-label={name}>{icons[name]}</Slot>
          ))}
          <QuickCaret aria-label="导出选项"><Triangle $color="#d5e8ff" /></QuickCaret>
          <Slot $w={31} aria-label="自定义">{icons.customize}</Slot>
        </QuickAccess>
        <AppTitle>亿图图示</AppTitle>
        <WindowButtons>
          <Slot $w={54} aria-label="最小化">{icons.minimize}</Slot>
          <Slot $w={52} aria-label="还原">{icons.restore}</Slot>
          <Slot $w={50} aria-label="关闭">{icons.close}</Slot>
        </WindowButtons>
      </TitleBar>
      <MenuBar>
        <Tabs>
          <FileTab>文件</FileTab>
          {menuTabs.map((tab, i) => (
            <MenuTab key={tab} $active={i === 0}>{tab}</MenuTab>
          ))}
        </Tabs>
        <AccountBar>
          <Slot $w={37} aria-label="发送">{icons.send}</Slot>
          <Slot $w={38} aria-label="分享">{icons.share}</Slot>
          <AccountName>AD</AccountName>
          <Svg width="24" height="21" viewBox="0 0 24 21">
            <path d="M5 0h14l5 7-12 14L0 7z" fill="#f3b13f" stroke="none" />
            <path d="m7 6 5 6 5-6" stroke="#fff" strokeWidth="3" />
          </Svg>
          <Slot $w={22} aria-label="会员"><Triangle $color="#c4e0ff" /></Slot>
          <Slot $w={32} aria-label="皮肤">{icons.shirt}</Slot>
          <Slot $w={14} aria-label="皮肤选项"><Triangle $color="#c4e0ff" /></Slot>
          <Slot $w={37} aria-label="应用">{icons.clover}</Slot>
          <Slot $w={38} aria-label="收起">{icons.up}</Slot>
        </AccountBar>
      </MenuBar>
    </Header>
  );
}

function RibbonBar() {
  return (
    <Ribbon>
      <ToolRows $row={54} $top={5}>
        <ToolRow>
          <Slot $w={42} aria-label="剪切">{icons.cut}</Slot>
          <Spacer />
          <Slot $w={42} aria-label="格式刷">{icons.painter}</Slot>
        </ToolRow>
        <ToolRow>
          <Slot $w={42} aria-label="复制">{icons.copy}</Slot>
          <Spacer />
          <Slot $w={32} $color="#444" aria-label="粘贴">{icons.paste}</Slot>
          <CaretButton $w={16} aria-label="粘贴选项"><Triangle $color="#666" /></CaretButton>
        </ToolRow>
      </ToolRows>
      <Divider />
      <ToolRows $row={50} $top={12} $left={9}>
        <ToolRow $indent={14}>
          <SelectBox $w={294}>
            <select aria-label="字体"><option>黑体</option></select>
            <Triangle />
          </SelectBox>
          <SelectBox $w={93}>
            <select aria-label="字号"><option>10</option></select>
            <Triangle />
          </SelectBox>
          <Slot $w={60} aria-label="增大字号">{icons.grow}</Slot>
          <Slot $w={50} aria-label="减小字号">{icons.shrink}</Slot>
          <Slot $w={43} aria-label="对齐方式">{icons.align}</Slot>
          <CaretButton aria-label="对齐选项"><Triangle $color="#bbb" /></CaretButton>
        </ToolRow>
        <ToolRow>
          {formatTools.map((name) => (
            <Slot key={name} $w={52} aria-label={name}>{icons[name]}</Slot>
          ))}
          <Slot $w={40} aria-label="文本格式">{icons.caseText}</Slot>
          <CaretButton aria-label="文本格式选项"><Triangle $color="#bbb" /></CaretButton>
          <Slot $w={46} $end aria-label="行距">{icons.spacing}</Slot>
          <CaretButton aria-label="行距选项"><Triangle $color="#bbb" /></CaretButton>
          <Slot $w={50} $end aria-label="列表">{icons.list}</Slot>
          <CaretButton aria-label="列表选项"><Triangle $color="#bbb" /></CaretButton>
          <Slot $w={47} $end $color="#a0a0a0" aria-label="突出显示">{icons.highlight}</Slot>
          <CaretButton aria-label="突出显示选项"><Triangle $color="#bbb" /></CaretButton>
          <Slot $w={47} $end $color="#a0a0a0" aria-label="字体颜色">{icons.fontColor}</Slot>
          <CaretButton aria-label="字体颜色选项"><Triangle $color="#bbb" /></CaretButton>
        </ToolRow>
      </ToolRows>
      <Divider $before={9} $after={11} />
      {drawTools.map((tool) => <ToolButton key={tool.label} tool={tool} />)}
      <Divider $before={14} $after={11} />
      {arrangeTools.map((tool) => <ToolButton key={tool.label} tool={tool} disabled />)}
      <Divider $before={14} />
      <BigButton $w={64}>
        <BigIcon $raised>{icons.bucket}</BigIcon>
        <span>样式</span>
        <Triangle $color="#666" />
      </BigButton>
      <Divider />
      <BigButton $w={64}>
        <BigIcon $raised>{icons.tools}</BigIcon>
        <span>工具</span>
        <Triangle $color="#666" />
      </BigButton>
      <Divider />
    </Ribbon>
  );
}

function SymbolLibrary() {
  return (
    <Library>
      <LibraryTitle>
        符号库
        {icons.chevrons}
      </LibraryTitle>
      <SearchRow>
        <Slot $w={25} $color="#444" aria-label="符号分类">{icons.box}</Slot>
        <CaretButton $w={12} aria-label="分类选项"><Triangle $color="#777" /></CaretButton>
        <SearchField>
          <input type="text" placeholder="搜索符号" aria-label="搜索符号" />
          {icons.search}
        </SearchField>
        <Stepper>
          <StepButton aria-label="上一个">{icons.stepUp}</StepButton>
          <StepButton aria-label="下一个">{icons.stepDown}</StepButton>
        </Stepper>
      </SearchRow>
      <Scroller>
        <ScrollContent>
          <SectionHead>
            <Triangle $size={6} $color="#777" />
            <span>我的库</span>
            <Slot $w={30} aria-label="导入">{icons.enter}</Slot>
            <Slot $w={30} aria-label="新建库">{icons.plusThin}</Slot>
            <Slot $w={30} aria-label="关闭">{icons.xThin}</Slot>
          </SectionHead>
          <DropHint>选中任意符号，点击上方加号添加到此库。</DropHint>
          <SectionHead>
            <Triangle $size={6} $color="#777" />
            <span>基本绘图形状</span>
            <Slot $w={30} aria-label="关闭">{icons.xThin}</Slot>
          </SectionHead>
          <ShapeGrid>
            {shapes.map((shape, i) => (
              <Svg key={i} width="73" height="73" viewBox="-36.500 -36.500 73 73" $stroke={1.2}>
                <g fill="#fff" stroke={shapeStroke}>{shape}</g>
              </Svg>
            ))}
          </ShapeGrid>
        </ScrollContent>
        <Gutter $thumb={42} />
      </Scroller>
    </Library>
  );
}

function Drawing() {
  return (
    <Paper>
      <Banner>
        <Svg width="467" height="38" viewBox="0 0 467 38">
          <path d="M34 0h379l-36 38H-1zM428 0h12l-34 38h-11zM456 0h9l-30 38h-9z" fill="#3fd1d4" stroke="none" />
        </Svg>
        <h2>优质决策的六大要素</h2>
      </Banner>
      <Columns>
        {columns.map((col) => (
          <Column key={col.title}>
            <Box>{col.title}</Box>
            <ArrowGap $h={39}><DownArrow /></ArrowGap>
            <Box $dark>{col.question}</Box>
            <ArrowGap $h={43}><DownArrow /></ArrowGap>
            <RedCard>
              <Svg width="92" height="92" viewBox="-46 -46 92 92">
                <circle r="44.500" fill="#fff" stroke="#b04a4a" strokeWidth="1" />
                {col.icon}
              </Svg>
              <p>{col.text}</p>
            </RedCard>
          </Column>
        ))}
      </Columns>
    </Paper>
  );
}

function Workbench() {
  return (
    <Workspace>
      <DocTabs>
        <DocTab>
          {icons.docLogo}
          <span>优质决策的六大要素</span>
          <Slot as="i" $w={44}>{icons.xThin}</Slot>
        </DocTab>
      </DocTabs>
      <Editor>
        <Corner />
        <RulerX>
          {Array.from({ length: 20 }, (_, i) => (
            <TickX key={i}>{(i - 2) * 20}</TickX>
          ))}
        </RulerX>
        <Corner />
        <RulerY>
          {Array.from({ length: 12 }, (_, i) => (
            <TickY key={i}><span>{i * 20}</span></TickY>
          ))}
        </RulerY>
        <Canvas>
          <Drawing />
        </Canvas>
        <ScrollY />
        <ScrollX />
        <Corner />
      </Editor>
      <Palette>
        <Slot $w={46} aria-label="填充">
          <Svg width="19" height="20" viewBox="0 0 26 28" $stroke={2.8}>{icons.bucket.props.children}</Svg>
        </Slot>
        {palette.map((color) => (
          <Swatch key={color} $color={`#${color}`} aria-label={`#${color}`} />
        ))}
      </Palette>
    </Workspace>
  );
}

function Themes() {
  return (
    <ThemePanel>
      <PanelTitle>主题</PanelTitle>
      <Scroller>
        <ScrollContent>
          <PanelBody>
            <Current>
              <Preview><CurrentTheme /></Preview>
              <OptionList>
                {options.map((option) => (
                  <Option key={option.label}>
                    <OptionIcon>{icons[option.icon]}</OptionIcon>
                    <span>{option.label}</span>
                  </Option>
                ))}
              </OptionList>
            </Current>
            <ThemeTabs>
              {themeTabs.map((tab, i) => (
                <ThemeTab key={tab.label} $active={i === 0}>
                  <span>{icons[tab.icon]}</span>
                  <span>{tab.label}</span>
                </ThemeTab>
              ))}
            </ThemeTabs>
            <ThemeGrid>
              {themes.map((theme, i) => (
                <ThemeCard key={i} aria-label={`主题 ${i + 1}`}><ThemeSketch theme={theme} /></ThemeCard>
              ))}
            </ThemeGrid>
          </PanelBody>
        </ScrollContent>
        <Gutter $thumb={322} />
      </Scroller>
    </ThemePanel>
  );
}

function StatusBar() {
  return (
    <Status>
      <StatusGroup>
        {icons.pages}
        <PageName>
          Page-1
          <Triangle $size={5} $color="#888" />
        </PageName>
        <PageTab>Page-1</PageTab>
        <Slot $w={40} aria-label="新建页面">{icons.plus}</Slot>
      </StatusGroup>
      <StatusGroup>
        <Slot $w={36} aria-label="演示">{icons.play}</Slot>
        <Slot $w={36} aria-label="缩小">{icons.minus}</Slot>
        <ZoomSlider type="range" min="0" max="100" defaultValue="11" aria-label="缩放" />
        <Slot $w={34} aria-label="放大">{icons.plus}</Slot>
        <ZoomValue>49%</ZoomValue>
        <Slot $w={28} aria-label="缩放比例"><Triangle $color="#999" /></Slot>
        <Spacer $w={11} />
        <Slot $w={34} aria-label="全屏">{icons.full}</Slot>
        <Slot $w={36} aria-label="适应宽度">{icons.fit}</Slot>
      </StatusGroup>
    </Status>
  );
}

function App() {
  return (
    <Window>
      <GlobalStyle />
      <TopBar />
      <RibbonBar />
      <Main>
        <SymbolLibrary />
        <Workbench />
        <IconStrip>
          <StripButton $first aria-label="收起面板">{icons.chevronsBig}</StripButton>
          {stripIcons.map((name) => (
            <StripButton key={name} $active={name === 'theme'} aria-label={name}>{icons[name]}</StripButton>
          ))}
        </IconStrip>
        <Themes />
      </Main>
      <StatusBar />
    </Window>
  );
}

export default App;
